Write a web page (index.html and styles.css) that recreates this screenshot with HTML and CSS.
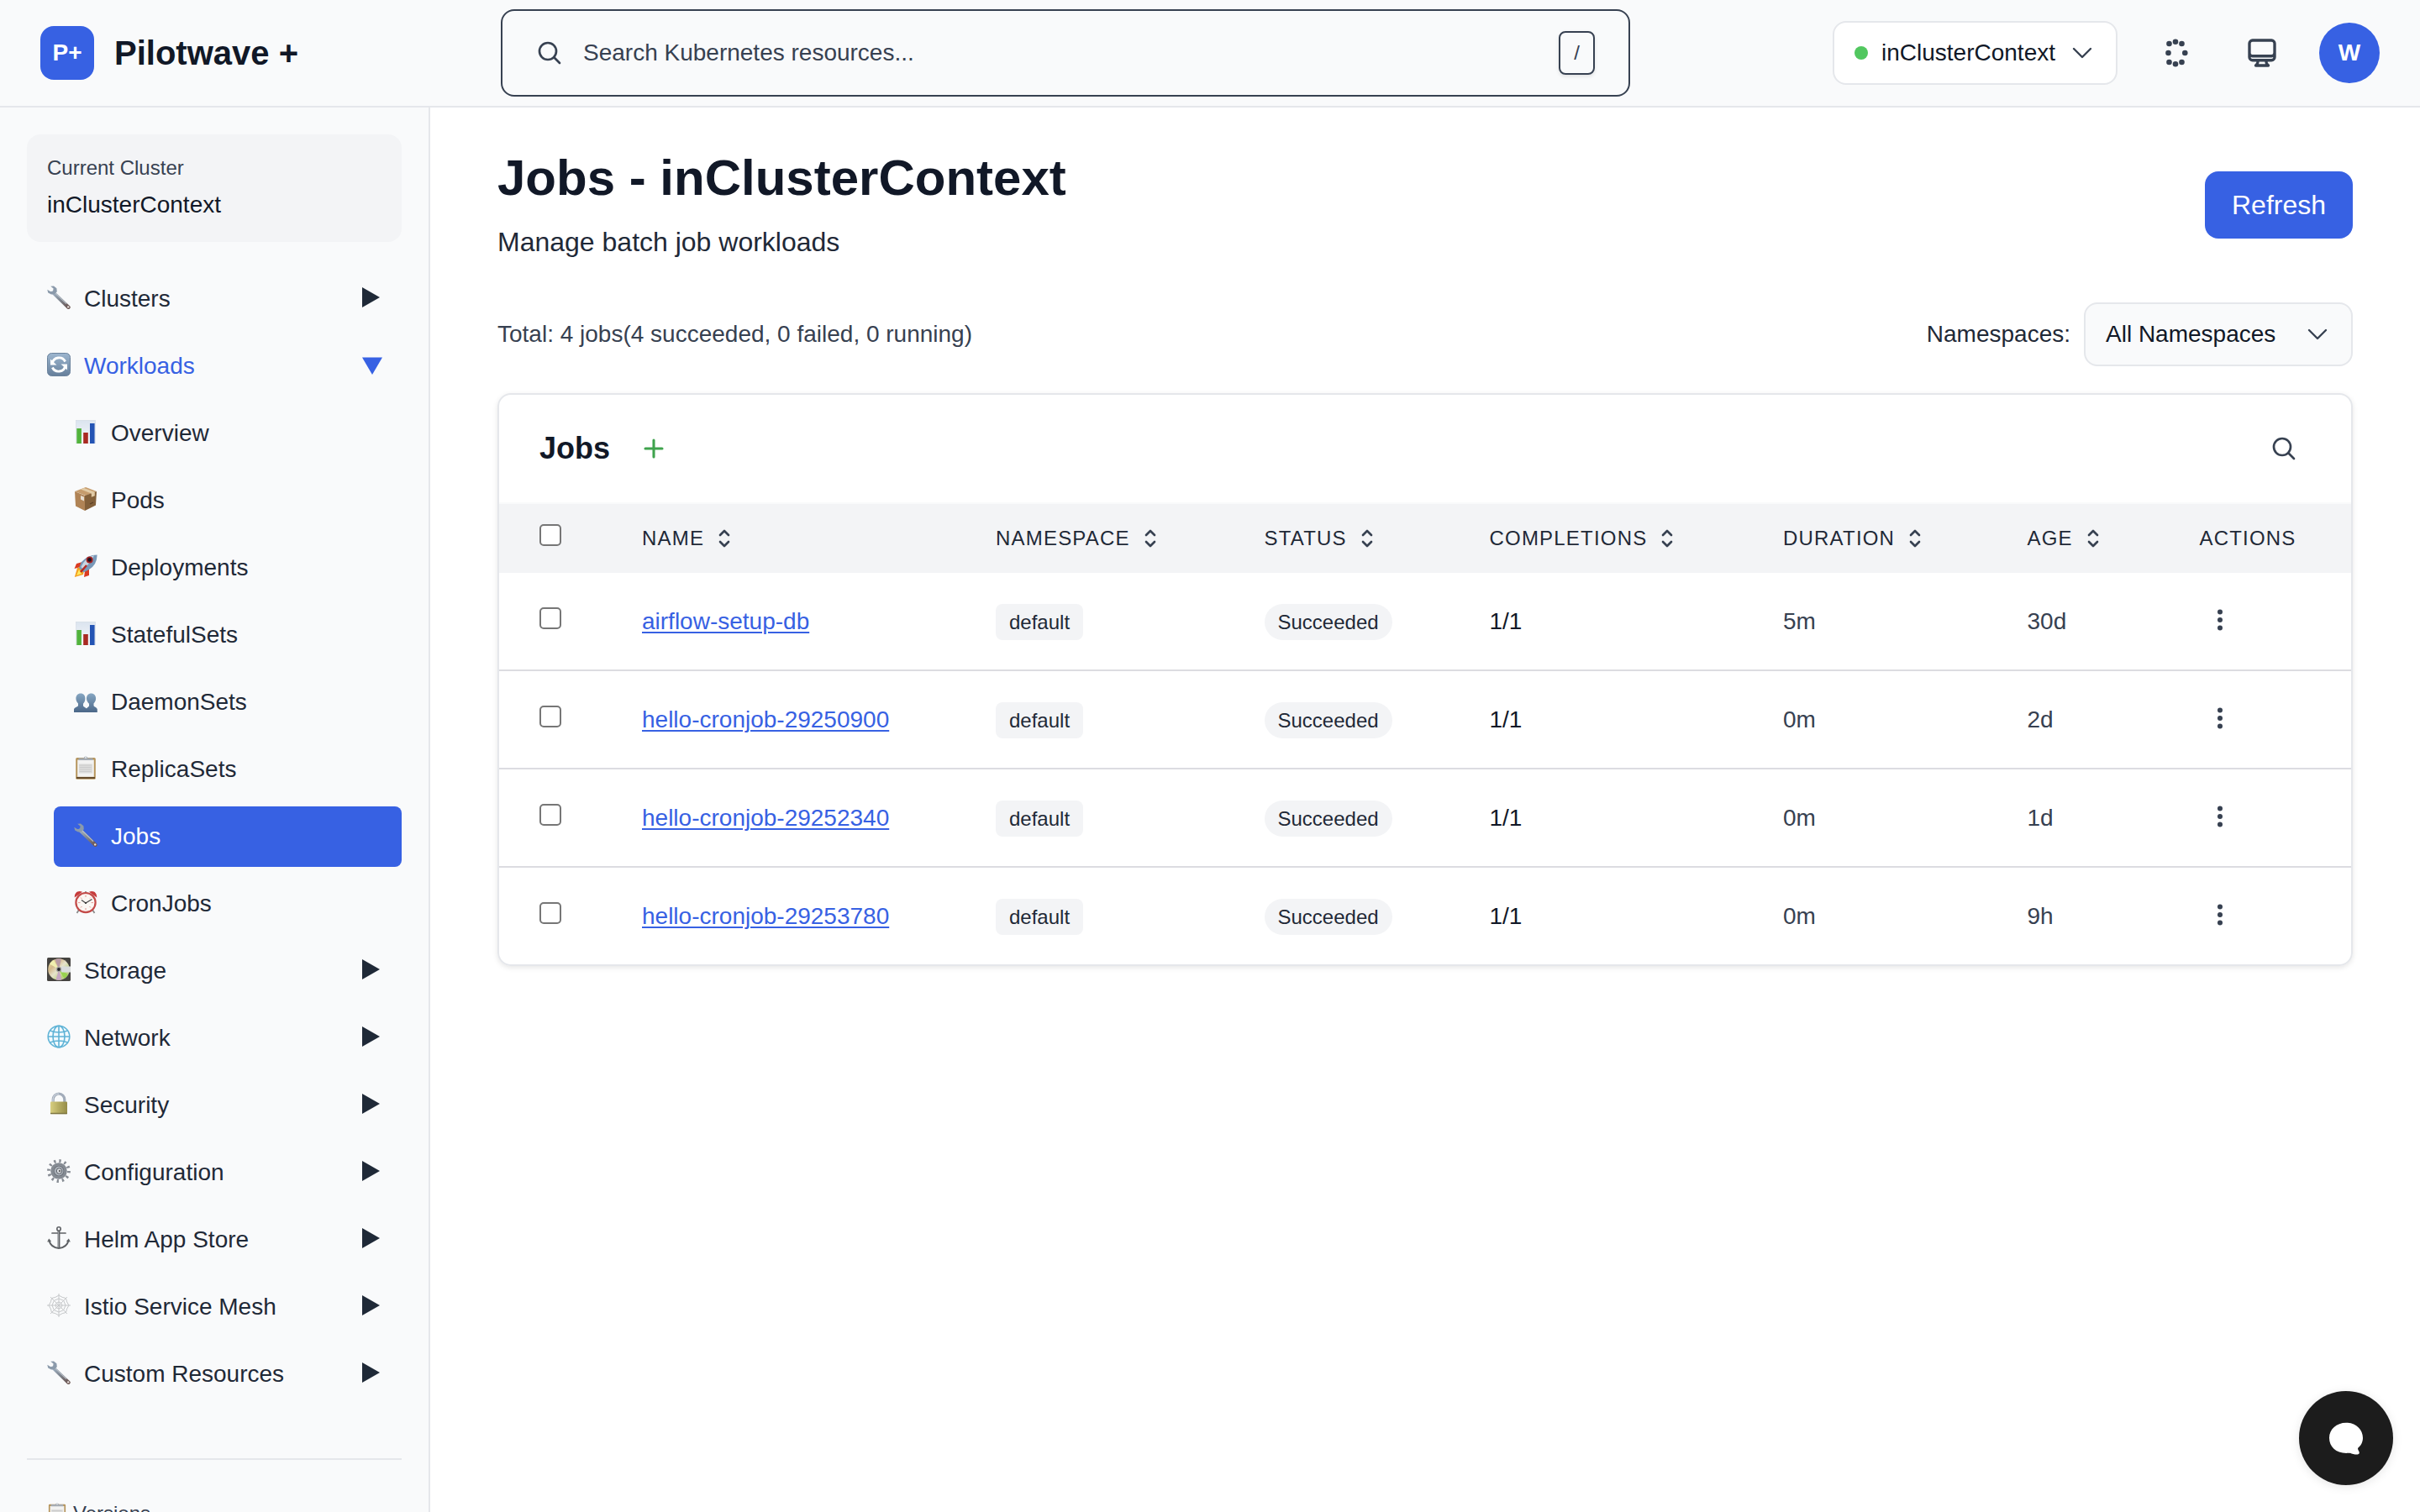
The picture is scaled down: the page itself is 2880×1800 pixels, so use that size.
FILE: index.html
```html
<!DOCTYPE html>
<html lang="en">
<head>
<meta charset="utf-8">
<title>Pilotwave + Jobs</title>
<link rel="stylesheet" href="styles.css">
</head>
<body>
<svg class="defs" aria-hidden="true">
  <defs>
    <linearGradient id="g-steel" x1="0" y1="0" x2="1" y2="1"><stop offset="0" stop-color="#9fb0c2"/><stop offset=".5" stop-color="#7d838c"/><stop offset="1" stop-color="#6b5450"/></linearGradient>
    <linearGradient id="g-sync" x1="0" y1="0" x2="0" y2="1"><stop offset="0" stop-color="#9db6cf"/><stop offset="1" stop-color="#667f9b"/></linearGradient>
    <linearGradient id="g-people" x1="0" y1="0" x2="0" y2="1"><stop offset="0" stop-color="#86a6c2"/><stop offset="1" stop-color="#4b6788"/></linearGradient>
    <linearGradient id="g-lock" x1="0" y1="0" x2="1" y2="0"><stop offset="0" stop-color="#d8cf80"/><stop offset=".5" stop-color="#b5ac62"/><stop offset="1" stop-color="#958c48"/></linearGradient>
    <linearGradient id="g-disc" x1="0" y1="0" x2="1" y2="1"><stop offset="0" stop-color="#e9e2a4"/><stop offset=".3" stop-color="#d3b98c"/><stop offset=".5" stop-color="#e6e3cd"/><stop offset=".75" stop-color="#b9cf7a"/><stop offset="1" stop-color="#dccbe0"/></linearGradient>
    <linearGradient id="g-chart" x1="0" y1="0" x2="0" y2="1"><stop offset="0" stop-color="#dbe4ef"/><stop offset="1" stop-color="#f6f8fb"/></linearGradient>
  </defs>
  <symbol id="i-wrench" viewBox="0 0 28 28">
    <path d="M7.500 8.500 25.500 25.800" stroke="url(#g-steel)" stroke-width="4.400" stroke-linecap="round" fill="none"/>
    <path d="M4.200.8 8 .5 11.400 3.200 11.800 7.200 9.200 10 5 10.400 1.200 8.400.3 4.800 4 7 7 6.800 7.600 3.600Z" fill="#8b9aab"/>
    <path d="M10 9 23 21.600" stroke="#b6bec7" stroke-width="1.200"/>
    <circle cx="25.200" cy="25.400" r="1.200" fill="#e9e2df"/>
  </symbol>
  <symbol id="i-sync" viewBox="0 0 28 28">
    <rect x=".5" y=".5" width="27" height="27" rx="5" fill="url(#g-sync)" stroke="#6b839d"/>
    <path d="M6.200 12.600A8.200 8.200 0 0 1 21.600 10.500M21.800 15.400A8.200 8.200 0 0 1 6.400 17.500" fill="none" stroke="#fff" stroke-width="2.900"/>
    <path d="M4 7.500v7h7.500Z M24 20.500v-7h-7.500Z" fill="#fff"/>
  </symbol>
  <symbol id="i-chart" viewBox="0 0 28 28">
    <rect x="2.400" y=".3" width="23" height="27.600" fill="url(#g-chart)" stroke="#d3dae3" stroke-width=".6"/>
    <path d="M3.300 10h5.600v18H3.300Z" fill="#52b33c"/><path d="M11.200 15h5.600v13h-5.600Z" fill="#a92a22"/><path d="M19 4h5.600v24H19Z" fill="#2454b4"/>
  </symbol>
  <symbol id="i-box" viewBox="0 0 28 28">
    <path d="M14 0 27 5 14 10 1 5Z" fill="#c69c6d"/><path d="M1 5 13 10V28L2 22.400Z" fill="#b08355"/><path d="M27 5 13 10V28L26 21.600Z" fill="#83603a"/>
    <path d="m8 2.400 12.800 5v4.400l4-1.600V5.800L12 .9Z" fill="#e2cba6"/><path d="m8 10 4 1.600v5l-4-2Z" fill="#e6ddd0"/><path d="m19 20 4-2" stroke="#5c4025" stroke-width="1.300"/>
  </symbol>
  <symbol id="i-rocket" viewBox="0 0 28 28">
    <path d="M10 9 3 11 .5 17 8 15Z M18 17v8l-6 2 1-7Z" fill="#da3b22"/>
    <path d="M4 16 .8 27 11 24l1-5-5-4Z" fill="#f3a021"/><path d="m6 18-3 7 6-2Z" fill="#ffe95e"/>
    <path d="M27.600.4Q16 .5 9 9l-3 7 5.500 5.500L18 18Q27.600 12 27.600.4Z" fill="#7898b8"/>
    <path d="M24 1.200Q14 3 8.400 15l2 2Q19 12 24 1.200Z" fill="#c9d5e0"/>
    <circle cx="18.600" cy="6.400" r="4" fill="#a62222"/><circle cx="18.600" cy="6.400" r="2.300" fill="#1e1420"/><path d="m15 13-7 8" stroke="#b92720" stroke-width="2.400"/>
  </symbol>
  <symbol id="i-people" viewBox="0 0 28 28">
    <path d="M8 5.400c3.500 0 5.600 2.600 5.400 6.400-.1 2.700-1 4.600-2.400 6v2.600c1.100 1.700 4.600 2 4.600 4.600v3H0v-3.400C.4 21.800 4.200 22 5 20v-2.400C3.600 16 2.500 14.200 2.400 11.800 2.300 8 4.500 5.400 8 5.400Z" fill="url(#g-people)"/>
    <path d="M20.500 5.400c3.500 0 5.700 2.600 5.600 6.400-.1 2.400-1.200 4.200-2.600 5.800V20c.8 2 4.100 1.800 4.300 4.600V28H14.500v-3c0-2.600 2.500-2.900 3.500-4.600v-2.600c-1.600-1.600-2.900-3.500-3-6-.2-3.800 2-6.400 5.500-6.400Z" fill="url(#g-people)"/>
  </symbol>
  <symbol id="i-clipboard" viewBox="0 0 28 28">
    <rect x="2.200" y="2" width="23.600" height="25.800" rx="1.600" fill="#b6955c"/><path d="M3 26h22" stroke="#654b2b" stroke-width="2"/>
    <rect x="4.200" y="4.600" width="19.600" height="20.200" fill="#f2f2f1"/>
    <path d="M6 9.500h16v11H6Z" fill="#dcdcdb"/><path d="M6.500 11h14M6.500 13.500h14M6.500 16h14M6.500 18.500h14" stroke="#cbcbcb" stroke-width="1.100"/>
    <path d="M5.500 2.400h6a2.600 2.600 0 0 1 5 0h6V5h-17Z" fill="#a5abb2"/><circle cx="14" cy="1.900" r=".9" fill="#eef1f5"/>
  </symbol>
  <symbol id="i-clock" viewBox="0 0 28 28">
    <path d="m6 23-2.500 4M22 23l2.500 4" stroke="#8c8c8c" stroke-width="1.800"/><path d="M14 1v4" stroke="#999" stroke-width="2"/>
    <path d="M.8 8.500C.5 3 4.500-.5 10 1.800Z M27.200 8.500C27.500 3 23.500-.5 18 1.800Z" fill="#c63b3b"/>
    <circle cx="14" cy="14.600" r="11.600" fill="#fbf7f3" stroke="#c34a48" stroke-width="2.200"/>
    <path d="M14 5.500v2.500M14 21v2.500M5 14.600h2.500M20.500 14.600H23M8 8.500l1.500 1.500M20 8.500l-1 1M8 20.500 9.500 19M20 20.500 18.500 19" stroke="#e59a94"/>
    <path d="m9 11.500 5 3.500 7.500-4.500" fill="none" stroke="#4a4a4a" stroke-width="1.300"/><circle cx="14" cy="15" r="1.100" fill="#333"/>
  </symbol>
  <symbol id="i-disk" viewBox="0 0 28 28">
    <rect width="28" height="28" rx="1.500" fill="#454340"/><circle cx="14" cy="14" r="12.800" fill="url(#g-disc)"/>
    <path d="M14 14 9.500 2.200Q13 .8 17 1.600Z" fill="#b99ca6"/><path d="m14 14-3.500 12.200q3 1 7 0Z" fill="#c6a6c4"/><path d="m14 14 6.500 10.900q3-2 4.500-5Z" fill="#97d24e"/><path d="M14 14 3 7.600Q5 4.500 8 2.800Z" fill="#f1efb0"/>
    <path d="M17 10.500h11v7H17Z" fill="#d9dcdd"/><circle cx="14" cy="14" r="3.200" fill="#a9a9a3"/><circle cx="14" cy="14" r="1.900" fill="#26262b"/>
  </symbol>
  <symbol id="i-globe" viewBox="0 0 28 28">
    <circle cx="14" cy="14" r="12.800" fill="#f2fafe"/>
    <g fill="none" stroke="#5fb3d6" stroke-width="1.600"><circle cx="14" cy="14" r="12.800"/><ellipse cx="14" cy="14" rx="7" ry="12.800"/><path d="M14 1v26M1 14h26M3.500 7Q14 11 24.500 7M3.500 21Q14 17 24.500 21"/></g>
  </symbol>
  <symbol id="i-lock" viewBox="0 0 28 28">
    <path d="M7.200 13V9a6.800 7 0 0 1 13.600 0v4" fill="none" stroke="#a2acba" stroke-width="3.200"/><path d="M7 13V9a7 7 0 0 1 7-7" fill="none" stroke="#dae0e8" stroke-width="1"/>
    <rect x="4" y="11.600" width="20" height="14.600" rx="1" fill="url(#g-lock)"/><path d="M4 25.500h20" stroke="#7d7540" stroke-width="1.400"/>
  </symbol>
  <symbol id="i-gear" viewBox="0 0 28 28">
    <circle cx="14" cy="14" r="12" fill="none" stroke="#868b93" stroke-width="3.800" stroke-dasharray="2.300 3.983"/>
    <circle cx="14" cy="14" r="8.300" fill="#9aa0a8" stroke="#858b93" stroke-width="3"/><circle cx="14" cy="14" r="6" fill="#a9afb7" stroke="#6f757d" stroke-width="1.200"/>
    <circle cx="14.500" cy="14" r="3.200" fill="#dfe3e8" stroke="#5a5f66" stroke-width="1"/><circle cx="15" cy="14" r="1.300" fill="#666"/>
  </symbol>
  <symbol id="i-anchor" viewBox="0 0 28 28">
    <g fill="none" stroke="#5d6064"><circle cx="14" cy="3" r="2.200" stroke-width="1.600"/><path d="M14 5v20" stroke-width="2.800"/><path d="M6 8h16" stroke-width="1.700" stroke-linecap="round"/><path d="M2.500 17C4 23 9 25.500 14 26c5-.5 10-3 11.500-9" stroke-width="2"/><path d="m.8 18.500 1.500-3 2.200 2.300M27.200 18.500l-1.500-3-2.200 2.300" stroke-width="1.200"/></g>
    <path d="M13.400 6v19" stroke="#b4b7ba" stroke-width=".8"/>
  </symbol>
  <symbol id="i-web" viewBox="0 0 28 28">
    <g fill="none" stroke="#c6c8ca" stroke-width="1"><path d="M14 0v28M0 14h28M4 4l20 20M24 4 4 24"/><path d="M14 2q4 3 8.500 3.500Q23 10 26 14q-3 4-3.500 8.500Q18 23 14 26q-4-3-8.500-3.500Q5 18 2 14q3-4 3.500-8.500Q10 5 14 2Z"/><path d="m14 6 5.700 2.300L22 14l-2.300 5.700L14 22l-5.700-2.300L6 14l2.300-5.700ZM14 10l2.800 1.200L18 14l-1.200 2.800L14 18l-2.800-1.200L10 14l1.200-2.800Z"/></g>
  </symbol>
  <symbol id="i-search" viewBox="0 0 24 24"><path d="m21 21-5.200-5.200M10.500 3a7.500 7.500 0 1 0 0 15 7.500 7.500 0 0 0 0-15Z" fill="none" stroke="currentColor" stroke-width="2" stroke-linecap="round"/></symbol>
  <symbol id="i-chevron" viewBox="0 0 24 24"><path d="m19.500 8.250-7.500 7.500-7.500-7.500" fill="none" stroke="currentColor" stroke-width="1.800" stroke-linecap="round" stroke-linejoin="round"/></symbol>
  <symbol id="i-sort" viewBox="0 0 24 24"><path d="M8.250 15 12 18.750 15.750 15M8.250 9 12 5.250 15.750 9" fill="none" stroke="currentColor" stroke-width="2" stroke-linecap="round" stroke-linejoin="round"/></symbol>
  <symbol id="i-more" viewBox="0 0 32 32"><g fill="currentColor"><circle cx="16" cy="6.600" r="3"/><circle cx="16" cy="16" r="3"/><circle cx="16" cy="25.400" r="3"/></g></symbol>
  <symbol id="i-right" viewBox="0 0 24 24"><path d="M0 0v24l21-12Z" fill="currentColor"/></symbol>
  <symbol id="i-down" viewBox="0 0 24 24"><path d="M0 3.500h24L12 24Z" fill="currentColor"/></symbol>
</svg>

<header class="topbar">
  <div class="brand"><span class="logo">P+</span><span class="brand-name">Pilotwave +</span></div>
  <div class="search">
    <svg class="icon"><use href="#i-search"/></svg>
    <span class="search-text">Search Kubernetes resources...</span>
    <kbd class="key">/</kbd>
  </div>
  <div class="tools">
    <div class="context"><i class="dot"></i><span>inClusterContext</span><svg class="icon muted"><use href="#i-chevron"/></svg></div>
    <svg class="icon-lg dots" viewBox="0 0 40 40"><g fill="currentColor"><circle cx="20" cy="6.700" r="3.300"/><circle cx="12.500" cy="9" r="3.300"/><circle cx="27.500" cy="9" r="3.300"/><circle cx="11.500" cy="20" r="3.300"/><circle cx="31.300" cy="20" r="3.300"/><circle cx="12.500" cy="31" r="3.300"/><circle cx="27.500" cy="31" r="3.300"/><circle cx="20" cy="33.300" r="3.300"/></g></svg>
    <svg class="icon-lg monitor" viewBox="0 0 24 24"><path d="M9 17.250v1.007a3 3 0 0 1-.879 2.122L7.500 21h9l-.621-.621A3 3 0 0 1 15 18.257V17.250m6-12V15a2.250 2.250 0 0 1-2.250 2.250H5.250A2.250 2.250 0 0 1 3 15V5.250m18 0A2.250 2.250 0 0 0 18.750 3H5.250A2.250 2.250 0 0 0 3 5.250m18 0V12a2.250 2.250 0 0 1-2.250 2.250H5.250A2.250 2.250 0 0 1 3 12V5.250" fill="none" stroke="currentColor" stroke-width="2" stroke-linecap="round" stroke-linejoin="round"/></svg>
    <span class="avatar">W</span>
  </div>
</header>

<div class="shell">
  <aside class="sidebar">
    <div class="cluster"><span class="cluster-label">Current Cluster</span><span class="cluster-name">inClusterContext</span></div>
    <nav class="nav">
      <a class="item"><svg class="emoji"><use href="#i-wrench"/></svg>Clusters<svg class="arrow"><use href="#i-right"/></svg></a>
      <a class="item open"><svg class="emoji"><use href="#i-sync"/></svg>Workloads<svg class="arrow"><use href="#i-down"/></svg></a>
      <a class="item sub"><svg class="emoji"><use href="#i-chart"/></svg>Overview</a>
      <a class="item sub"><svg class="emoji"><use href="#i-box"/></svg>Pods</a>
      <a class="item sub"><svg class="emoji"><use href="#i-rocket"/></svg>Deployments</a>
      <a class="item sub"><svg class="emoji"><use href="#i-chart"/></svg>StatefulSets</a>
      <a class="item sub"><svg class="emoji"><use href="#i-people"/></svg>DaemonSets</a>
      <a class="item sub"><svg class="emoji"><use href="#i-clipboard"/></svg>ReplicaSets</a>
      <a class="item sub active"><svg class="emoji"><use href="#i-wrench"/></svg>Jobs</a>
      <a class="item sub"><svg class="emoji"><use href="#i-clock"/></svg>CronJobs</a>
      <a class="item"><svg class="emoji"><use href="#i-disk"/></svg>Storage<svg class="arrow"><use href="#i-right"/></svg></a>
      <a class="item"><svg class="emoji"><use href="#i-globe"/></svg>Network<svg class="arrow"><use href="#i-right"/></svg></a>
      <a class="item"><svg class="emoji"><use href="#i-lock"/></svg>Security<svg class="arrow"><use href="#i-right"/></svg></a>
      <a class="item"><svg class="emoji"><use href="#i-gear"/></svg>Configuration<svg class="arrow"><use href="#i-right"/></svg></a>
      <a class="item"><svg class="emoji"><use href="#i-anchor"/></svg>Helm App Store<svg class="arrow"><use href="#i-right"/></svg></a>
      <a class="item"><svg class="emoji"><use href="#i-web"/></svg>Istio Service Mesh<svg class="arrow"><use href="#i-right"/></svg></a>
      <a class="item"><svg class="emoji"><use href="#i-wrench"/></svg>Custom Resources<svg class="arrow"><use href="#i-right"/></svg></a>
    </nav>
    <div class="versions"><svg class="emoji"><use href="#i-clipboard"/></svg>Versions</div>
  </aside>

  <main class="main">
    <div class="page-head">
      <div><h1>Jobs - inClusterContext</h1><p class="subtitle">Manage batch job workloads</p></div>
      <button class="refresh">Refresh</button>
    </div>
    <div class="filters">
      <span class="total">Total: 4 jobs(4 succeeded, 0 failed, 0 running)</span>
      <div class="ns"><span>Namespaces:</span><div class="select"><span>All Namespaces</span><svg class="icon muted"><use href="#i-chevron"/></svg></div></div>
    </div>
    <section class="card">
      <div class="card-head">
        <h2>Jobs</h2>
        <svg class="icon plus" viewBox="0 0 24 24"><path d="M12 4.500v15M4.500 12h15" stroke="currentColor" stroke-width="2.300" stroke-linecap="round"/></svg>
        <svg class="icon muted find"><use href="#i-search"/></svg>
      </div>
      <div class="row head">
        <span><i class="check"></i></span>
        <span>NAME<svg class="icon"><use href="#i-sort"/></svg></span>
        <span>NAMESPACE<svg class="icon"><use href="#i-sort"/></svg></span>
        <span>STATUS<svg class="icon"><use href="#i-sort"/></svg></span>
        <span>COMPLETIONS<svg class="icon"><use href="#i-sort"/></svg></span>
        <span>DURATION<svg class="icon"><use href="#i-sort"/></svg></span>
        <span>AGE<svg class="icon"><use href="#i-sort"/></svg></span>
        <span>ACTIONS</span>
      </div>
      <div class="row"><span><i class="check"></i></span><span><a class="link">airflow-setup-db</a></span><span><b class="badge">default</b></span><span><b class="badge pill">Succeeded</b></span><span class="strong">1/1</span><span>5m</span><span>30d</span><span><svg class="icon more"><use href="#i-more"/></svg></span></div>
      <div class="row"><span><i class="check"></i></span><span><a class="link">hello-cronjob-29250900</a></span><span><b class="badge">default</b></span><span><b class="badge pill">Succeeded</b></span><span class="strong">1/1</span><span>0m</span><span>2d</span><span><svg class="icon more"><use href="#i-more"/></svg></span></div>
      <div class="row"><span><i class="check"></i></span><span><a class="link">hello-cronjob-29252340</a></span><span><b class="badge">default</b></span><span><b class="badge pill">Succeeded</b></span><span class="strong">1/1</span><span>0m</span><span>1d</span><span><svg class="icon more"><use href="#i-more"/></svg></span></div>
      <div class="row"><span><i class="check"></i></span><span><a class="link">hello-cronjob-29253780</a></span><span><b class="badge">default</b></span><span><b class="badge pill">Succeeded</b></span><span class="strong">1/1</span><span>0m</span><span>9h</span><span><svg class="icon more"><use href="#i-more"/></svg></span></div>
    </section>
  </main>
</div>
<button class="chat" aria-label="Chat"><svg viewBox="0 0 112 112"><path d="M56 37.700c11.300 0 20 7.800 20 18 0 5-2.300 9.300-6 12.300 0 2.700 1.800 3.300 1.800 5.300 0 1.900-1.300 2.200-3.500 2.200-4.300 0-5.300-1.500-9.300-1.700C45 75 36 66.700 36 55.700c0-10.200 8.700-18 20-18Z" fill="#fff"/></svg></button>
</body>
</html>
```
FILE: styles.css
```css
* { box-sizing: border-box; }
body {
  margin: 0;
  height: 1800px;
  overflow: hidden;
  display: flex;
  flex-direction: column;
  background: #fff;
  color: #111827;
  font: 28px/40px "Liberation Sans", Arial, sans-serif;
}
.defs { position: absolute; width: 0; height: 0; }
.icon { width: 32px; height: 32px; flex: none; display: block; }
.icon-lg { width: 40px; height: 40px; flex: none; display: block; color: #374151; }
.muted { color: #374151; }

.topbar {
  height: 128px;
  flex: none;
  display: flex;
  align-items: center;
  padding: 0 48px;
  background: #f9fafb;
  border-bottom: 2px solid #e5e7eb;
}
.brand { width: 548px; display: flex; align-items: center; gap: 24px; }
.logo {
  width: 64px;
  height: 64px;
  border-radius: 16px;
  background: #3761e3;
  color: #fff;
  font-weight: 700;
  line-height: 63px;
  text-align: center;
}
.brand-name { font-size: 40px; font-weight: 700; line-height: 56px; }
.search {
  width: 1344px;
  height: 104px;
  display: flex;
  align-items: center;
  padding: 0 40px;
  border: 2px solid #374151;
  border-radius: 16px;
  color: #374151;
}
.search-text { margin-left: 24px; line-height: 40px; }
.key {
  margin-left: auto;
  width: 43px;
  height: 52px;
  border: 2px solid #374151;
  border-radius: 8px;
  box-shadow: 0 2px 4px rgba(0, 0, 0, .1);
  font: 24px/48px "Liberation Sans", Arial, sans-serif;
  text-align: center;
}
.tools { margin-left: auto; display: flex; align-items: center; }
.context {
  width: 339px;
  height: 76px;
  display: flex;
  align-items: center;
  justify-content: space-between;
  padding: 0 24px;
  background: #fff;
  border: 2px solid #e5e7eb;
  border-radius: 16px;
}
.dot { width: 16px; height: 16px; border-radius: 50%; background: #51c75f; }
.dots { margin-left: 49px; }
.monitor { margin-left: 63px; }
.avatar {
  margin-left: 48px;
  width: 72px;
  height: 72px;
  border-radius: 50%;
  background: #3761e3;
  color: #fff;
  font-weight: 700;
  line-height: 71px;
  text-align: center;
}

.shell { flex: 1; min-height: 0; display: flex; }
.sidebar {
  width: 512px;
  flex: none;
  padding: 32px;
  overflow: hidden;
  background: #f9fafb;
  border-right: 2px solid #e5e7eb;
}
.cluster {
  height: 128px;
  display: flex;
  flex-direction: column;
  gap: 8px;
  padding: 24px;
  border-radius: 16px;
  background: #f3f4f6;
}
.cluster-label { color: #374151; font-size: 24px; line-height: 32px; }
.nav { margin-top: 32px; display: flex; flex-direction: column; gap: 8px; }
.item {
  height: 72px;
  display: flex;
  align-items: center;
  gap: 16px;
  padding: 0 24px;
  border-radius: 8px;
  color: #1f2937;
}
.emoji { width: 28px; height: 28px; flex: none; display: block; margin-top: -4px; }
.item.sub { margin-left: 32px; }
.item.open { color: #3761e3; }
.item.active { background: #3761e3; color: #fff; }
.arrow { width: 24px; height: 24px; margin: -4px -1px 0 auto; }
.versions {
  margin-top: 64px;
  padding: 48px 24px;
  display: flex;
  align-items: center;
  gap: 7px;
  border-top: 2px solid #e5e7eb;
  color: #374151;
  font-size: 24px;
  line-height: 32px;
}
.versions .emoji { width: 24px; height: 24px; margin-top: -2px; }

.main { flex: 1; padding: 46px 80px 0; }
.page-head { display: flex; align-items: center; justify-content: space-between; height: 140px; }
h1 { margin: 0 0 16px; font-size: 60px; line-height: 72px; }
.subtitle { margin: 0; color: #1f2937; font-size: 32px; line-height: 48px; }
.refresh {
  width: 176px;
  height: 80px;
  padding: 0;
  border: 0;
  border-radius: 16px;
  background: #3761e3;
  color: #fff;
  font: 32px "Liberation Sans", Arial, sans-serif;
}
.filters { margin-top: 46px; height: 76px; display: flex; align-items: center; justify-content: space-between; }
.total { color: #374151; }
.ns { display: flex; align-items: center; gap: 16px; color: #1f2937; }
.select {
  width: 320px;
  height: 76px;
  display: flex;
  align-items: center;
  justify-content: space-between;
  padding: 0 24px;
  background: #f9fafb;
  border: 2px solid #e5e7eb;
  border-radius: 16px;
  color: #111827;
}

.card {
  margin-top: 32px;
  border: 2px solid #e5e7eb;
  border-radius: 16px;
  overflow: hidden;
  box-shadow: 0 2px 6px rgba(0, 0, 0, .1);
}
.card-head {
  height: 130px;
  display: flex;
  align-items: center;
  padding: 0 64px 0 48px;
  border-bottom: 2px solid #f9fafb;
}
h2 { margin: 0; font-size: 36px; line-height: 56px; }
.plus { margin-left: 36px; color: #3fa34d; }
.find { margin-left: auto; }
.row {
  height: 117px;
  display: grid;
  grid-template-columns: 122px 421px 319.500px 268px 349.500px 290.500px 205px 1fr;
  align-items: center;
  padding-left: 48px;
  border-bottom: 2px solid #dcdce1;
  color: #374151;
}
.row:last-child { height: 115px; border-bottom: 0; }
.row span { display: flex; align-items: center; }
.head {
  height: 82px;
  border-bottom: 0;
  background: #f3f4f6;
  color: #1f2937;
  font-size: 24px;
  letter-spacing: 1.200px;
}
.head .icon { margin-left: 8px; color: #374151; }
.check {
  width: 26px;
  height: 26px;
  margin-top: -7px;
  border: 2px solid #767676;
  border-radius: 5px;
  background: #fff;
}
.head .check { margin-top: -8px; }
.link { color: #3761e3; text-decoration: underline; text-decoration-thickness: 2px; text-underline-offset: 3px; }
.badge {
  height: 43px;
  padding: 0 16px;
  margin-top: 2px;
  border-radius: 8px;
  background: #f3f4f6;
  color: #1f2937;
  font-size: 24px;
  font-weight: 400;
  line-height: 43px;
}
.pill { border-radius: 22px; }
.row .strong { color: #111827; }
.more { margin: -3px 0 0 8px; }

.chat {
  position: absolute;
  right: 32px;
  bottom: 32px;
  width: 112px;
  height: 112px;
  padding: 0;
  border: 0;
  border-radius: 50%;
  background: #1c1c1c;
  box-shadow: 0 2px 12px rgba(0, 0, 0, .1);
}
.chat svg { display: block; width: 112px; height: 112px; }
```
